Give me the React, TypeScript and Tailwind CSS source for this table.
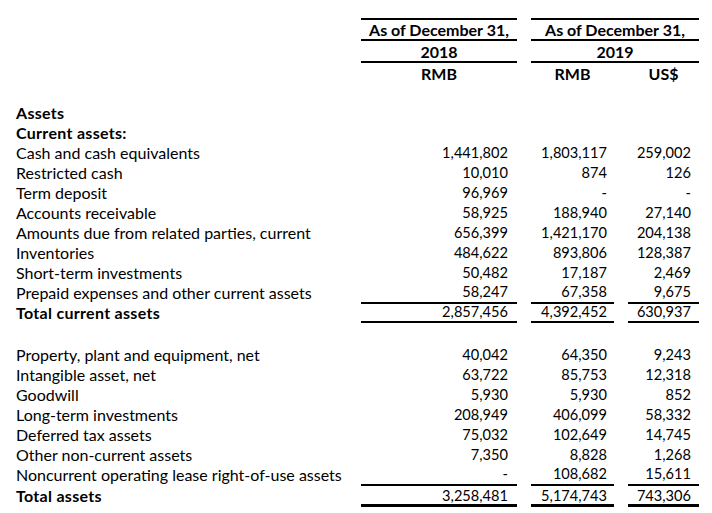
import React from "react";

type Line = "single" | "total" | "grand";
type Row = {
  label: string;
  bold?: boolean;
  v?: [string, string, string];
  line?: Line;
  blankBefore?: boolean;
};

const rows: Row[] = [
  { label: "Assets", bold: true },
  { label: "Current assets:", bold: true },
  { label: "Cash and cash equivalents", v: ["1,441,802", "1,803,117", "259,002"] },
  { label: "Restricted cash", v: ["10,010", "874", "126"] },
  { label: "Term deposit", v: ["96,969", "-", "-"] },
  { label: "Accounts receivable", v: ["58,925", "188,940", "27,140"] },
  { label: "Amounts due from related parties, current", v: ["656,399", "1,421,170", "204,138"] },
  { label: "Inventories", v: ["484,622", "893,806", "128,387"] },
  { label: "Short-term investments", v: ["50,482", "17,187", "2,469"] },
  { label: "Prepaid expenses and other current assets", v: ["58,247", "67,358", "9,675"], line: "single" },
  { label: "Total current assets", bold: true, v: ["2,857,456", "4,392,452", "630,937"], line: "total" },
  { label: "Property, plant and equipment, net", v: ["40,042", "64,350", "9,243"], blankBefore: true },
  { label: "Intangible asset, net", v: ["63,722", "85,753", "12,318"] },
  { label: "Goodwill", v: ["5,930", "5,930", "852"] },
  { label: "Long-term investments", v: ["208,949", "406,099", "58,332"] },
  { label: "Deferred tax assets", v: ["75,032", "102,649", "14,745"] },
  { label: "Other non-current assets", v: ["7,350", "8,828", "1,268"] },
  { label: "Noncurrent operating lease right-of-use assets", v: ["-", "108,682", "15,611"], line: "single" },
  { label: "Total assets", bold: true, v: ["3,258,481", "5,174,743", "743,306"], line: "grand" },
];

function rowHeight(line?: Line) {
  if (line === "single") return "h-[21px]";
  if (line === "total") return "h-[19px]";
  if (line === "grand") return "h-[21px] pt-[2px]";
  return "h-[20px]";
}

function borderFor(line: Line | undefined, visible: boolean) {
  const color = visible ? "border-black" : "border-transparent";
  if (line === "single" || line === "total") return `border-b-2 ${color}`;
  if (line === "grand") return `border-b-[3px] ${color}`;
  return "";
}

function Cell({ w, pr, value, line }: { w: string; pr: string; value?: string; line?: Line }) {
  return (
    <div className={`${w} ${pr} ${rowHeight(line)} ${borderFor(line, true)} flex items-center justify-end text-[14.6px]`}>
      {value}
    </div>
  );
}

export default function App() {
  return (
    <div
      className="w-[712px] h-[513px] bg-white text-black text-[16px] overflow-hidden"
      style={{ fontFamily: "Lato, 'Liberation Sans', sans-serif" }}
    >
      <div className="h-[18px]" />
      {/* header */}
      <div className="flex font-bold leading-none">
        <div className="w-[361px]" />
        <div className="w-[156px] border-t-2 border-black">
          <div className="h-[21px] pt-[1px] flex items-center justify-center border-b-2 border-black">As of December 31,</div>
          <div className="h-[22px] pt-[2px] flex items-center justify-center border-b-2 border-black">2018</div>
          <div className="h-[20px] pt-[2px] flex items-center justify-center">RMB</div>
        </div>
        <div className="w-[14px]" />
        <div className="w-[168px] border-t-2 border-black">
          <div className="h-[21px] pt-[1px] flex items-center justify-center border-b-2 border-black">As of December 31,</div>
          <div className="h-[22px] pt-[2px] flex items-center justify-center border-b-2 border-black">2019</div>
          <div className="h-[20px] pt-[2px] flex">
            <div className="w-[83px] flex items-center justify-center">RMB</div>
            <div className="w-[14px]" />
            <div className="w-[71px] flex items-center justify-center">US$</div>
          </div>
        </div>
      </div>
      <div className="h-[20px]" />
      {rows.map((r, i) => {
        const line = r.v ? r.line : undefined;
        return (
          <React.Fragment key={i}>
            {r.blankBefore && <div className="h-[22px]" />}
            <div className="flex leading-none">
              <div
                className={`w-[361px] pl-4 ${rowHeight(line)} ${borderFor(line, false)} flex items-center ${
                  r.bold ? "font-bold tracking-[0.3px]" : ""
                }`}
              >
                {r.label}
              </div>
              <Cell w="w-[156px]" pr="pr-[9px]" value={r.v?.[0]} line={line} />
              <div className="w-[14px]" />
              <Cell w="w-[83px]" pr="pr-[7px]" value={r.v?.[1]} line={line} />
              <div className="w-[14px]" />
              <Cell w="w-[71px]" pr="pr-[8px]" value={r.v?.[2]} line={line} />
            </div>
          </React.Fragment>
        );
      })}
    </div>
  );
}
